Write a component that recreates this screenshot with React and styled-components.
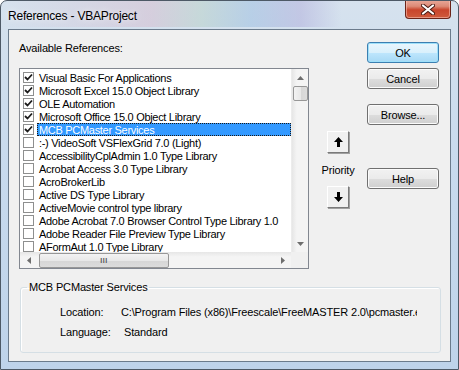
import React from "react";
import styled, { createGlobalStyle } from "styled-components";

const GlobalStyle = createGlobalStyle`
    html, body {
        margin: 0;
        padding: 0;
        background: #ffffff;
    }
    body {
        font-family: "Liberation Sans", Arial, sans-serif;
        font-size: 11px;
        color: #000;
    }
`;

const Window = styled.div`
    width: 459px;
    height: 370px;
    box-sizing: border-box;
    border: 1px solid #4d5966;
    border-radius: 7px 7px 0 0;
    background:
        linear-gradient(90deg,
            rgba(255,255,255,0) 0px,
            rgba(214,170,190,0.35) 150px,
            rgba(170,200,180,0.35) 200px,
            rgba(140,180,220,0.4) 250px,
            rgba(160,150,210,0.35) 300px,
            rgba(255,255,255,0) 340px) 0 0 / 100% 26px no-repeat,
        linear-gradient(180deg, #d6e2ee 0%, #c9dbee 40%, #bed3ea 100%);
    display: flex;
    flex-direction: column;
    overflow: hidden;
`;

const TitleBar = styled.div`
    height: 28px;
    display: flex;
    justify-content: space-between;
    align-items: flex-start;
    padding-left: 7px;
`;

const Title = styled.div`
    font-size: 12px;
    letter-spacing: -0.2px;
    line-height: 14px;
    margin-top: 8px;
    color: #000;
    text-shadow: 0 0 6px rgba(255,255,255,0.9);
`;

const CloseButton = styled.div`
    width: 46px;
    height: 19px;
    margin-right: 7px;
    margin-top: -1px;
    box-sizing: border-box;
    border: 1px solid #6b2419;
    border-top: none;
    border-radius: 0 0 4px 4px;
    background: linear-gradient(180deg, #e9a99a 0%, #dd8a76 35%, #c9452c 55%, #cf5a3c 100%);
    display: flex;
    align-items: center;
    justify-content: center;
    box-shadow: inset 0 0 0 1px rgba(255,210,200,0.5);
`;

const Client = styled.div`
    flex: 1;
    margin: 0 7px 7px 7px;
    border: 1px solid #6b7b8c;
    background: #f0f0f0;
    padding: 11px 0 0 10px;
    display: flex;
    flex-direction: column;
`;

const MainRow = styled.div`
    display: flex;
    align-items: flex-start;
`;

const LeftCol = styled.div`
    width: 290px;
    display: flex;
    flex-direction: column;
`;

const Label = styled.div`
    height: 14px;
    line-height: 14px;
    margin-bottom: 13px;
    letter-spacing: -0.15px;
`;

const ListBox = styled.div`
    width: 290px;
    height: 201px;
    box-sizing: border-box;
    border: 1px solid #828790;
    background: #fff;
    display: grid;
    grid-template-columns: 1fr 17px;
    grid-template-rows: 1fr 16px;
`;

const ListArea = styled.div`
    overflow: hidden;
    padding-top: 2px;
    padding-left: 3px;
`;

const Row = styled.div`
    height: 13px;
    display: flex;
    align-items: center;
    white-space: nowrap;
`;

const Check = styled.div`
    width: 11px;
    height: 11px;
    box-sizing: border-box;
    border: 1px solid #8e8f8f;
    background: #fff;
    margin-right: 3px;
    flex: none;
    display: flex;
    align-items: center;
    justify-content: center;
`;

const ItemText = styled.div`
    height: 13px;
    line-height: 12px;
    letter-spacing: -0.3px;
    padding: 0 1px;
    box-sizing: border-box;
    flex: ${(p) => (p.$selected ? "1" : "none")};
    background: ${(p) => (p.$selected ? "#3399ff" : "transparent")};
    color: ${(p) => (p.$selected ? "#fff" : "#000")};
    border: 1px ${(p) => (p.$selected ? "dotted #1a1a1a" : "solid transparent")};
`;

const VScroll = styled.div`
    background: linear-gradient(90deg, #e6e6e6 0%, #f4f4f4 30%, #f4f4f4 100%);
    border-left: 1px solid #ececec;
    display: flex;
    flex-direction: column;
    align-items: center;
`;

const HScroll = styled.div`
    background: linear-gradient(180deg, #e6e6e6 0%, #f4f4f4 30%, #f4f4f4 100%);
    display: flex;
    align-items: center;
`;

const Corner = styled.div`
    background: #f0f0f0;
`;

const ArrowCell = styled.div`
    width: ${(p) => (p.$h ? "17px" : "16px")};
    height: ${(p) => (p.$h ? "16px" : "17px")};
    display: flex;
    align-items: center;
    justify-content: center;
    flex: none;
`;

const Thumb = styled.div`
    box-sizing: border-box;
    border: 1px solid #979797;
    border-radius: 2px;
    background: ${(p) =>
        p.$h
            ? "linear-gradient(180deg, #f3f3f3 0%, #e8e8e8 50%, #d6d6d6 51%, #dcdcdc 100%)"
            : "linear-gradient(90deg, #f3f3f3 0%, #e8e8e8 50%, #d6d6d6 51%, #dcdcdc 100%)"};
    display: flex;
    align-items: center;
    justify-content: center;
`;

const VThumb = styled(Thumb)`
    width: 15px;
    height: 15px;
`;

const HThumb = styled(Thumb)`
    width: 130px;
    height: 15px;
    margin-left: 2px;
`;

const Grip = styled.div`
    font-size: 7px;
    line-height: 7px;
    color: #5a5a5a;
    letter-spacing: 0.5px;
    font-weight: bold;
`;

const Spacer = styled.div`
    flex: 1;
`;

const MidCol = styled.div`
    width: 58px;
    display: flex;
    flex-direction: column;
    align-items: center;
    padding-top: 90px;
`;

const ArrowButton = styled.div`
    width: 22px;
    height: 22px;
    box-sizing: border-box;
    border: 1px solid;
    border-color: #ffffff #7a7a7a #7a7a7a #ffffff;
    box-shadow: 1px 1px 0 #a0a0a0;
    background: #f0f0f0;
    display: flex;
    align-items: center;
    justify-content: center;
`;

const PriorityText = styled.div`
    line-height: 14px;
    margin: 10px 0 9px 0;
    color: #000;
    letter-spacing: -0.15px;
`;

const RightCol = styled.div`
    width: 72px;
    display: flex;
    flex-direction: column;
    padding-top: 1px;
`;

const Button = styled.div`
    height: 21px;
    box-sizing: border-box;
    border: 1px solid ${(p) => (p.$default ? "#3c7fb1" : "#707070")};
    border-radius: 3px;
    background: ${(p) =>
        p.$default
            ? "linear-gradient(180deg, #eaf6fd 0%, #d9f0fc 50%, #bee6fd 51%, #a7d9f5 100%)"
            : "linear-gradient(180deg, #f2f2f2 0%, #ebebeb 50%, #dddddd 51%, #cfcfcf 100%)"};
    box-shadow: inset 0 0 0 1px ${(p) => (p.$default ? "#9ee0fa" : "#fbfbfb")};
    display: flex;
    align-items: center;
    justify-content: center;
    line-height: 14px;
    margin-top: ${(p) => p.$gap || 0}px;
    letter-spacing: -0.15px;
`;

const GroupBox = styled.fieldset`
    margin: 11px 0 0 1px;
    width: 421px;
    box-sizing: border-box;
    border: 1px solid #d5dfe5;
    border-radius: 3px;
    padding: 8px 0 10px 0;
    box-shadow: inset 1px 1px 0 #ffffff;
`;

const Legend = styled.legend`
    margin-left: 6px;
    padding: 0 2px;
    line-height: 14px;
    letter-spacing: -0.15px;
`;

const InfoGrid = styled.div`
    margin-left: 39px;
`;

const InfoRow = styled.div`
    display: grid;
    grid-template-columns: ${(p) => p.$labelWidth}px 1fr;
    height: 20px;
    align-items: center;
    white-space: nowrap;
    letter-spacing: -0.15px;
`;

const InfoValue = styled.div`
    overflow: hidden;
    width: 296px;
`;

const references = [
    { name: "Visual Basic For Applications", checked: true },
    { name: "Microsoft Excel 15.0 Object Library", checked: true },
    { name: "OLE Automation", checked: true },
    { name: "Microsoft Office 15.0 Object Library", checked: true },
    { name: "MCB PCMaster Services", checked: true, selected: true },
    { name: ":-) VideoSoft VSFlexGrid 7.0 (Light)" },
    { name: "AccessibilityCplAdmin 1.0 Type Library" },
    { name: "Acrobat Access 3.0 Type Library" },
    { name: "AcroBrokerLib" },
    { name: "Active DS Type Library" },
    { name: "ActiveMovie control type library" },
    { name: "Adobe Acrobat 7.0 Browser Control Type Library 1.0" },
    { name: "Adobe Reader File Preview Type Library" },
    { name: "AFormAut 1.0 Type Library" },
];

function CheckMark() {
    return (
        <svg width="9" height="9" viewBox="0 0 9 9">
            <path d="M1 4 L3.5 6.5 L8 1.5" fill="none" stroke="#1c1c1c" strokeWidth="1.8" />
        </svg>
    );
}

function Tri({ dir }) {
    const pts = {
        up: "0,4 3.5,0 7,4",
        down: "0,0 3.5,4 7,0",
        left: "4,0 0,3.5 4,7",
        right: "0,0 4,3.5 0,7",
    }[dir];
    const horiz = dir === "left" || dir === "right";
    return (
        <svg width={horiz ? 4 : 7} height={horiz ? 7 : 4} viewBox={horiz ? "0 0 4 7" : "0 0 7 4"}>
            <polygon points={pts} fill="#6e6e6e" />
        </svg>
    );
}

function BoldArrow({ up }) {
    return (
        <svg width="9" height="10" viewBox="0 0 9 10">
            <g transform={up ? "" : "rotate(180 4.5 5)"}>
                <polygon points="4.5,0 9,5 6,5 6,10 3,10 3,5 0,5" fill="#000" />
            </g>
        </svg>
    );
}

function CloseGlyph() {
    return (
        <svg width="14" height="11" viewBox="0 0 14 11">
            <path d="M2 1.5 L12 9.5 M12 1.5 L2 9.5" stroke="#4a1a12" strokeWidth="4" strokeLinecap="round" />
            <path d="M2 1.5 L12 9.5 M12 1.5 L2 9.5" stroke="#ffffff" strokeWidth="2.2" strokeLinecap="round" />
        </svg>
    );
}

export default function App() {
    return (
        <>
            <GlobalStyle />
            <Window>
                <TitleBar>
                    <Title>References - VBAProject</Title>
                    <CloseButton>
                        <CloseGlyph />
                    </CloseButton>
                </TitleBar>
                <Client>
                    <MainRow>
                        <LeftCol>
                            <Label>Available References:</Label>
                            <ListBox>
                                <ListArea>
                                    {references.map((r) => (
                                        <Row key={r.name}>
                                            <Check>{r.checked && <CheckMark />}</Check>
                                            <ItemText $selected={r.selected}>{r.name}</ItemText>
                                        </Row>
                                    ))}
                                </ListArea>
                                <VScroll>
                                    <ArrowCell>
                                        <Tri dir="up" />
                                    </ArrowCell>
                                    <VThumb>
                                        <Grip />
                                    </VThumb>
                                    <Spacer />
                                    <ArrowCell>
                                        <Tri dir="down" />
                                    </ArrowCell>
                                </VScroll>
                                <HScroll>
                                    <ArrowCell $h>
                                        <Tri dir="left" />
                                    </ArrowCell>
                                    <HThumb $h>
                                        <Grip>III</Grip>
                                    </HThumb>
                                    <Spacer />
                                    <ArrowCell $h>
                                        <Tri dir="right" />
                                    </ArrowCell>
                                </HScroll>
                                <Corner />
                            </ListBox>
                        </LeftCol>
                        <MidCol>
                            <ArrowButton>
                                <BoldArrow up />
                            </ArrowButton>
                            <PriorityText>Priority</PriorityText>
                            <ArrowButton>
                                <BoldArrow />
                            </ArrowButton>
                        </MidCol>
                        <RightCol>
                            <Button $default>OK</Button>
                            <Button $gap={5}>Cancel</Button>
                            <Button $gap={15}>Browse...</Button>
                            <Button $gap={43}>Help</Button>
                        </RightCol>
                    </MainRow>
                    <GroupBox>
                        <Legend>MCB PCMaster Services</Legend>
                        <InfoGrid>
                            <InfoRow $labelWidth={61}>
                                <span>Location:</span>
                                <InfoValue>C:\Program Files (x86)\Freescale\FreeMASTER 2.0\pcmaster.exe</InfoValue>
                            </InfoRow>
                            <InfoRow $labelWidth={64}>
                                <span>Language:</span>
                                <InfoValue>Standard</InfoValue>
                            </InfoRow>
                        </InfoGrid>
                    </GroupBox>
                </Client>
            </Window>
        </>
    );
}
